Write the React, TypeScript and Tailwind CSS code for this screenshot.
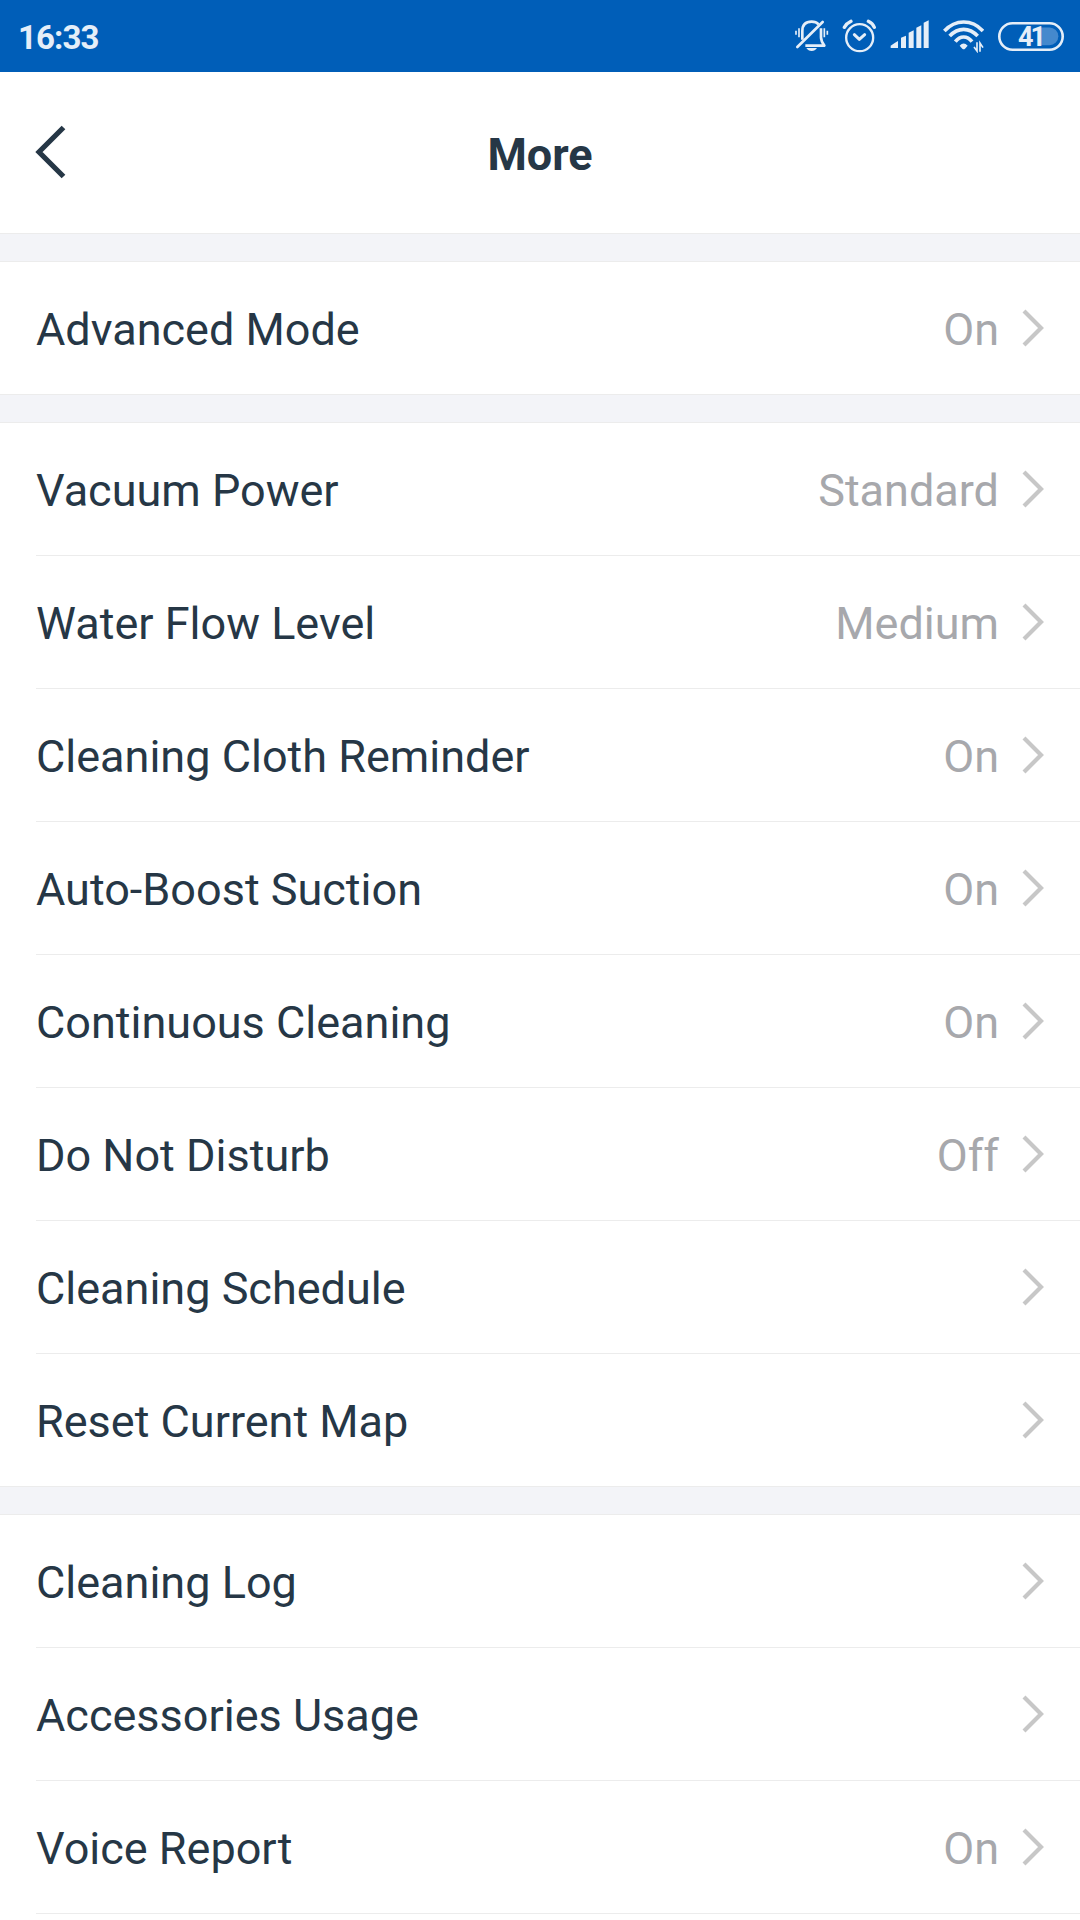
import React from 'react';

interface SettingItem {
  label: string;
  value?: string;
}

interface SettingGroupProps {
  items: SettingItem[];
  closed?: boolean;
}

const modeItems: SettingItem[] = [{ label: 'Advanced Mode', value: 'On' }];

const cleaningItems: SettingItem[] = [
  { label: 'Vacuum Power', value: 'Standard' },
  { label: 'Water Flow Level', value: 'Medium' },
  { label: 'Cleaning Cloth Reminder', value: 'On' },
  { label: 'Auto-Boost Suction', value: 'On' },
  { label: 'Continuous Cleaning', value: 'On' },
  { label: 'Do Not Disturb', value: 'Off' },
  { label: 'Cleaning Schedule' },
  { label: 'Reset Current Map' },
];

const deviceItems: SettingItem[] = [
  { label: 'Cleaning Log' },
  { label: 'Accessories Usage' },
  { label: 'Voice Report', value: 'On' },
];

const MutedBellIcon = () => (
  <svg className="w-[34px] h-[34px]" viewBox="0 0 102 102" fill="none" stroke="currentColor">
    <path d="M22 62V36C22 17 33 8 50 8C59 8 66 11 71 16" strokeWidth="8" />
    <path d="M78 28V55C78 66 82 72 88 80H31" strokeWidth="8" strokeLinejoin="round" />
    <path d="M7 84L83 9" strokeWidth="8" strokeLinecap="round" />
    <path d="M3 35V47M12 28V55M88 28V55M97 35V47" strokeWidth="5" />
    <path d="M34 87H66C62 93 57 96 50 96C43 96 38 93 34 87Z" fill="currentColor" stroke="none" />
  </svg>
);

const AlarmIcon = () => (
  <svg className="w-[34px] h-[34px]" viewBox="0 0 102 102" fill="none" stroke="currentColor">
    <circle cx="53" cy="56" r="40.5" strokeWidth="7" />
    <path d="M37 47L52 61L68 47" strokeWidth="9" strokeLinecap="round" strokeLinejoin="round" />
    <path d="M7 25Q14 13 27 7M79 7Q92 13 97 25" strokeWidth="10" strokeLinecap="round" />
  </svg>
);

const SignalIcon = () => (
  <svg className="w-[39px] h-[34px]" viewBox="0 0 117 102" fill="currentColor">
    <path d="M2 87V80Q10 74 24 66V87Z" />
    <path d="M33 87V56L48 50V87Z" />
    <path d="M56 87V41L71 34V87Z" />
    <path d="M79 87V26L94 19V87Z" />
    <path d="M101 87V11L116 4V87Z" />
  </svg>
);

const WifiIcon = () => (
  <svg className="w-[41px] h-[34px]" viewBox="0 0 123 102" fill="none" stroke="currentColor">
    <g strokeWidth="11">
      <path d="M4 36Q29 9 62 9Q95 9 120 36" />
      <path d="M20 51Q39 31 62 31Q85 31 104 51" />
      <path d="M37 68Q48 54 62 54Q76 54 87 68" />
    </g>
    <path d="M50 80Q62 67 74 80L66 89Q62 92 58 89Z" fill="currentColor" stroke="none" />
    <path d="M102 70V96L93 84M111 98V72L120 86" strokeWidth="5" />
  </svg>
);

const BatteryIcon = () => (
  <div className="relative w-[66px] h-[29px]">
    <svg className="block w-[66px] h-[29px]" viewBox="0 0 66 29" fill="none">
      <path d="M43 5.5H51.5A8.8 8.8 0 0 1 51.5 23.2H43Z" fill="#4589cd" />
      <rect x="1.3" y="1.3" width="63.4" height="26.4" rx="13.2" stroke="currentColor" strokeWidth="2.6" />
    </svg>
    <span className="absolute left-5 top-0 text-[27px] leading-[30px] font-bold tracking-[-3px]">
      41
    </span>
  </div>
);

const StatusBar = () => (
  <div className="flex h-[72px] items-center justify-between bg-[#005eb8] pl-[18px] pr-4 text-[#e5eef8]">
    <span className="pt-0.5 text-[33px] leading-none font-bold tracking-[-0.9px]">16:33</span>
    <div className="flex items-center">
      <MutedBellIcon />
      <div className="ml-[13px]">
        <AlarmIcon />
      </div>
      <div className="ml-[14px]">
        <SignalIcon />
      </div>
      <div className="ml-[14px]">
        <WifiIcon />
      </div>
      <div className="ml-[14px]">
        <BatteryIcon />
      </div>
    </div>
  </div>
);

const Header = () => (
  <header className="grid h-[162px] grid-cols-3 items-center border-b border-[#ececec] px-[34px]">
    <svg className="-mt-0.5 h-[54px] w-8 text-[#263746]" viewBox="0 0 32 54" fill="none">
      <path d="M29.5 2.5L5 27L29.5 51.5" stroke="currentColor" strokeWidth="5.2" />
    </svg>
    <h1 className="pt-[5px] text-center text-[45px] font-bold">More</h1>
  </header>
);

const SettingGroup: React.FC<SettingGroupProps> = ({ items, closed = true }) => (
  <section
    className={`border-t border-[#ececec] bg-white ${closed ? 'mb-[27px] border-b' : ''}`}
  >
    {items.map(({ label, value }, index) => {
      const hasDivider = !closed || index < items.length - 1;

      return (
        <div
          key={label}
          className={`ml-9 flex items-center pr-9 ${
            hasDivider ? 'h-[133px] border-b border-[#ececec]' : 'h-[132px]'
          }`}
        >
          <span className="flex-1 pt-[3px] text-[45px]">{label}</span>
          {value && <span className="pt-[3px] text-[45px] text-[#a7a8ac]">{value}</span>}
          <svg
            className="-mt-px ml-[23px] h-[38px] w-[22px] text-[#c7c7c7]"
            viewBox="0 0 22 38"
            fill="none"
          >
            <path d="M2 2L19 19L2 36" stroke="currentColor" strokeWidth="4.2" />
          </svg>
        </div>
      );
    })}
  </section>
);

export default function App() {
  return (
    <div className="h-[1920px] w-[1080px] overflow-hidden bg-white font-['Roboto',sans-serif] text-[#263746]">
      <StatusBar />
      <Header />
      <main className="bg-[#f3f4f8] pt-[27px]">
        <SettingGroup items={modeItems} />
        <SettingGroup items={cleaningItems} />
        <SettingGroup items={deviceItems} closed={false} />
      </main>
    </div>
  );
}
